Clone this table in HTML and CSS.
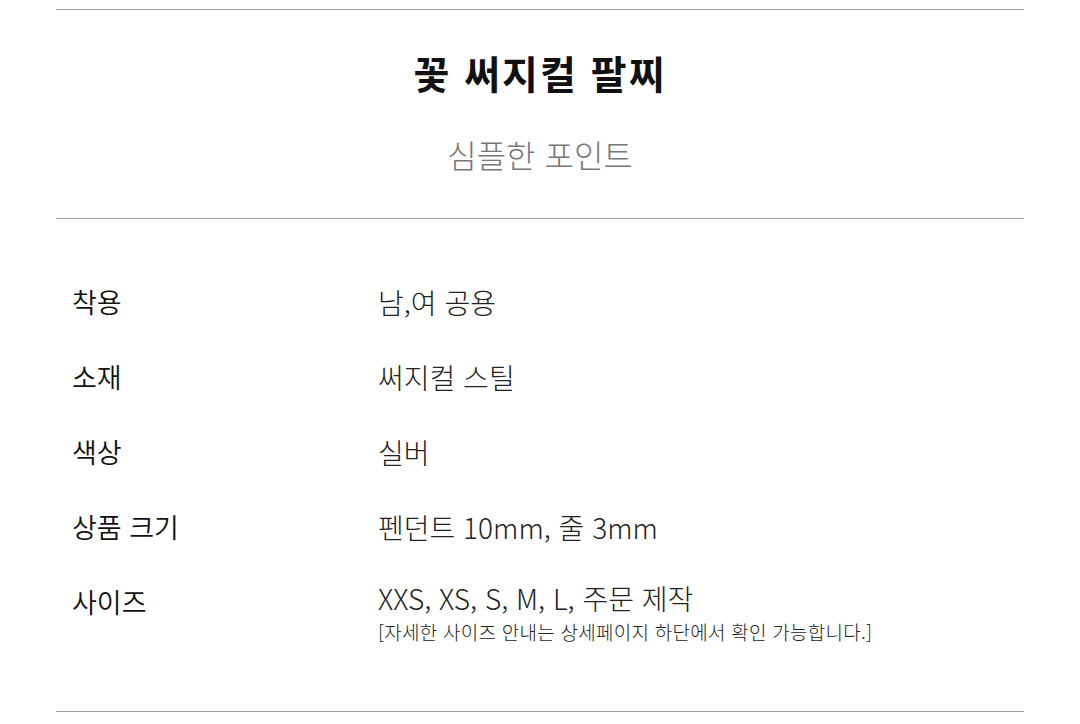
FILE: index.html
```html
<!DOCTYPE html>
<html lang="ko">
<head>
<meta charset="utf-8">
<link rel="stylesheet" href="styles.css">
</head>
<body>
<div class="page">
  <hr class="rule rule-top">
  <header class="head">
    <h1 class="title">꽃 써지컬 팔찌</h1>
    <p class="subtitle">심플한 포인트</p>
  </header>
  <hr class="rule">
  <section class="specs">
    <div class="row"><div class="label">착용</div><div class="value">남,여 공용</div></div>
    <div class="row"><div class="label">소재</div><div class="value">써지컬 스틸</div></div>
    <div class="row"><div class="label">색상</div><div class="value">실버</div></div>
    <div class="row"><div class="label">상품 크기</div><div class="value">펜던트 10mm, 줄 3mm</div></div>
    <div class="row"><div class="label">사이즈</div><div class="value value-multi">XXS, XS, S, M, L, 주문 제작<span class="note">[자세한 사이즈 안내는 상세페이지 하단에서 확인 가능합니다.]</span></div></div>
  </section>
  <hr class="rule">
</div>
</body>
</html>
```

FILE: styles.css
```css
html, body {
  margin: 0;
  padding: 0;
  background: #ffffff;
}
body {
  font-family: "Noto Sans CJK KR", "Noto Sans", sans-serif;
  color: #111111;
}
.page {
  padding: 0 56px;
}
.rule {
  border: 0;
  border-top: 1px solid #a0a0a0;
  margin: 0;
  height: 0;
}
.rule-top {
  margin-top: 9px;
}
.head {
  text-align: center;
  padding: 38px 0 44px;
}
.title {
  margin: 0;
  font-size: 39px;
  line-height: 48px;
  letter-spacing: 2px;
  font-weight: 700;
  color: #111111;
}
.subtitle {
  margin: 38px 0 0;
  font-size: 32px;
  line-height: 40px;
  font-weight: 300;
  color: #777777;
}
.specs {
  padding: 65px 0 65px 16px;
  display: flex;
  flex-direction: column;
  gap: 39px;
}
.row {
  display: flex;
}
.label {
  width: 306px;
  flex: none;
  font-size: 27px;
  line-height: 36px;
  font-weight: 350;
  color: #111111;
}
.value {
  font-size: 28px;
  line-height: 36px;
  font-weight: 300;
  color: #222222;
}
.value-multi {
  line-height: 28px;
}
.note {
  display: block;
  padding-top: 6px;
  font-size: 19px;
  line-height: 28px;
  letter-spacing: 0.25px;
}
```
